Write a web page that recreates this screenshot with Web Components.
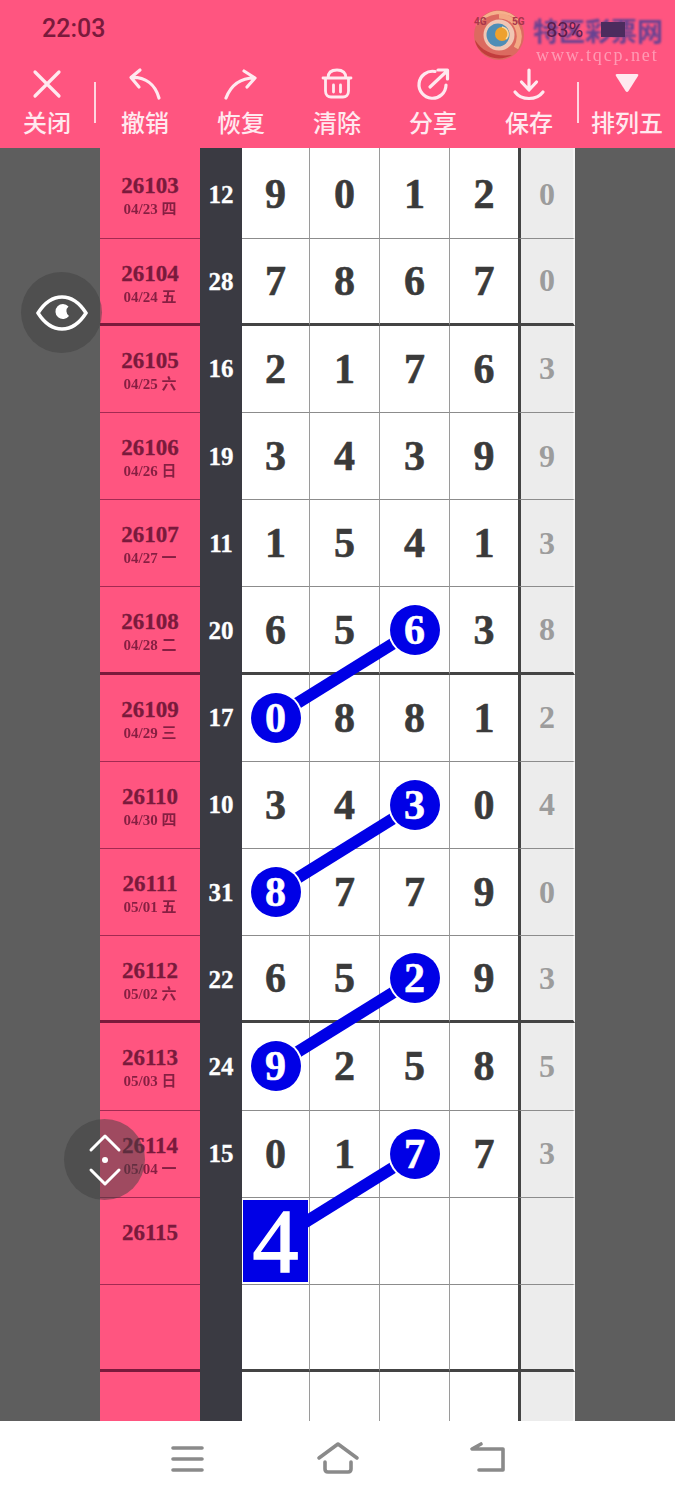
<!DOCTYPE html>
<html lang="zh">
<head>
<meta charset="utf-8">
<title>排列五</title>
<style>
  html, body { margin: 0; padding: 0; }
  body {
    width: 675px;
    height: 1500px;
    overflow: hidden;
    display: flex;
    flex-direction: column;
    background: #5e5e5e;
    font-family: "Liberation Serif", "Noto Sans CJK SC", serif;
  }
</style>
</head>
<body>
<status-bar time="22:03"></status-bar>
<tool-bar>
  <tool-button label="关闭" style="width:94px">
    <svg viewBox="0 0 34 34" width="34" height="34" fill="none" stroke="currentColor" stroke-width="3.2" stroke-linecap="round"><path d="M5 5 29 29M29 5 5 29"/></svg>
  </tool-button>
  <tool-sep></tool-sep>
  <tool-button label="撤销">
    <svg viewBox="0 0 34 34" width="34" height="34" fill="none" stroke="currentColor" stroke-width="3.2" stroke-linecap="round" stroke-linejoin="round"><path d="M12 3 3 10.500 11 20M3.500 10.500C17 10 27 17 31 31"/></svg>
  </tool-button>
  <tool-button label="恢复">
    <svg viewBox="0 0 34 34" width="34" height="34" fill="none" stroke="currentColor" stroke-width="3.2" stroke-linecap="round" stroke-linejoin="round"><path d="M20 4 31 11 23 20M30.500 11C16 11 7 18 2 31"/></svg>
  </tool-button>
  <tool-button label="清除">
    <svg viewBox="0 0 34 34" width="34" height="34" fill="none" stroke="currentColor" stroke-width="2.8" stroke-linecap="round" stroke-linejoin="round"><path d="M3 11H31M8 11C8 6 11 3 17 3S26 6 26 11M5.500 11V24C5.500 28 8 30 11 30H23C26 30 28.500 28 28.500 24V11M13.500 18V25M20.500 18V25"/></svg>
  </tool-button>
  <tool-button label="分享">
    <svg viewBox="0 0 34 34" width="34" height="34" fill="none" stroke="currentColor" stroke-width="3.2" stroke-linecap="round" stroke-linejoin="round"><path d="M19 4.500A13.500 13.500 0 1 0 30 18M14 20 31 4M22 3H31.500V12"/></svg>
  </tool-button>
  <tool-button label="保存">
    <svg viewBox="0 0 34 34" width="34" height="34" fill="none" stroke="currentColor" stroke-width="3.2" stroke-linecap="round" stroke-linejoin="round"><path d="M17 3V22M9.500 15 17 23 24.500 15M3 25C6 29 11 31.500 17 31.500S28 29 31 25"/></svg>
  </tool-button>
  <tool-sep></tool-sep>
  <tool-button label="排列五" style="width:94px">
    <svg viewBox="0 0 34 34" width="34" height="34"><path d="M7 7H27Q29 7 28 9L18.500 24Q17 26 15.500 24L6 9Q5 7 7 7Z" fill="currentColor"/></svg>
  </tool-button>
</tool-bar>
<draw-board>
  <draw-row issue="26103" date="04/23 四" sum="12" digits="9012" tail="0" style="--h:90.7px;--top:3px"></draw-row>
  <draw-row issue="26104" date="04/24 五" sum="28" digits="7867" tail="0" thick></draw-row>
  <draw-row issue="26105" date="04/25 六" sum="16" digits="2176" tail="3"></draw-row>
  <draw-row issue="26106" date="04/26 日" sum="19" digits="3439" tail="9"></draw-row>
  <draw-row issue="26107" date="04/27 一" sum="11" digits="1541" tail="3"></draw-row>
  <draw-row issue="26108" date="04/28 二" sum="20" digits="6563" tail="8" marked="2" thick></draw-row>
  <draw-row issue="26109" date="04/29 三" sum="17" digits="0881" tail="2" marked="0"></draw-row>
  <draw-row issue="26110" date="04/30 四" sum="10" digits="3430" tail="4" marked="2"></draw-row>
  <draw-row issue="26111" date="05/01 五" sum="31" digits="8779" tail="0" marked="0"></draw-row>
  <draw-row issue="26112" date="05/02 六" sum="22" digits="6529" tail="3" marked="2" thick></draw-row>
  <draw-row issue="26113" date="05/03 日" sum="24" digits="9258" tail="5" marked="0"></draw-row>
  <draw-row issue="26114" date="05/04 一" sum="15" digits="0177" tail="3" marked="2"></draw-row>
  <draw-row issue="26115" square="4"></draw-row>
  <draw-row thick></draw-row>
  <draw-row></draw-row>
</draw-board>
<nav-bar></nav-bar>

<script>
  class StatusBar extends HTMLElement {
    constructor() {
      super();
      this.attachShadow({ mode: "open" });
    }

    connectedCallback() {
      this.shadowRoot.innerHTML = `
        <style>
          :host {
            display: flex;
            align-items: center;
            box-sizing: border-box;
            height: 62px;
            padding: 0 0 6px 42px;
            position: relative;
            background: #ff5580;
            color: #7a1a3c;
            font: 500 25px/1 Roboto, sans-serif;
          }
          .logo { position: absolute; left: 472px; top: 8px; filter: blur(.7px); }
          .brand {
            position: absolute; left: 533px; top: 15px;
            font: 700 26px/30px "Noto Sans CJK SC", sans-serif;
            color: rgba(62, 62, 150, .78);
            filter: blur(.8px);
          }
          .net {
            position: absolute; left: 536px; top: 45px;
            font: 400 18px/20px "Liberation Serif", serif;
            letter-spacing: 1.9px;
            color: rgba(255, 255, 255, .4);
            filter: blur(.4px);
          }
          .batt {
            position: absolute; left: 546px; top: 19px;
            font: 400 20px/22px Roboto, sans-serif;
            color: #5a1c4c;
          }
          .block { position: absolute; left: 601px; top: 22px; width: 24px; height: 15px; background: #4c2c5e; filter: blur(.5px); }
          .net-type {
            position: absolute; top: 16px;
            font: 700 10px/12px Roboto, sans-serif;
            color: #a8364c;
          }
        </style>
        <span>${this.getAttribute("time")}</span>
        <svg class="logo" width="54" height="54" viewBox="0 0 54 54" fill="none">
          <circle cx="27" cy="27" r="25" fill="#dc6a60"/>
          <path d="M4 18A25 25 0 0 1 48 14 30 30 0 0 0 4 18Z" fill="#f6b18c"/>
          <path d="M3 32C5 46 24 56 40 47 24 49 10 44 3 32Z" fill="#c23c3c"/>
          <path d="M44 40C52 26 44 8 27 8" stroke="#f3a884" stroke-width="5"/>
          <circle cx="27" cy="27" r="15.500" fill="#f0c6b4"/>
          <circle cx="26" cy="27" r="11.500" fill="#4e8db6"/>
          <circle cx="30" cy="26" r="7" fill="#eea12e"/>
          <path d="M30 19C36 20 38 27 34 31" stroke="#f6d9a8" stroke-width="1.500"/>
        </svg>
        <span class="net-type" style="left:474px">4G</span>
        <span class="net-type" style="left:512px">5G</span>
        <span class="brand">特区彩票网</span>
        <span class="net">www.tqcp.net</span>
        <span class="batt">83%</span>
        <span class="block"></span>
      `;
    }
  }

  class ToolBar extends HTMLElement {
    constructor() {
      super();
      this.attachShadow({ mode: "open" });
      this.shadowRoot.innerHTML = `
        <style>
          :host {
            display: flex;
            height: 86px;
            background: #ff5580;
            color: #ffe9ef;
          }
        </style>
        <slot></slot>
      `;
    }
  }

  class ToolButton extends HTMLElement {
    constructor() {
      super();
      this.attachShadow({ mode: "open" });
    }

    connectedCallback() {
      this.shadowRoot.innerHTML = `
        <style>
          :host {
            display: flex;
            flex-direction: column;
            align-items: center;
            flex: none;
            width: 96px;
            padding-top: 5px;
            box-sizing: border-box;
          }
          .icon { height: 34px; }
          .label {
            margin-top: 3px;
            font: 500 24px/36px "Noto Sans CJK SC", sans-serif;
            white-space: nowrap;
          }
        </style>
        <div class="icon"><slot></slot></div>
        <div class="label">${this.getAttribute("label")}</div>
      `;
    }
  }

  class ToolSep extends HTMLElement {
    constructor() {
      super();
      this.attachShadow({ mode: "open" });
      this.shadowRoot.innerHTML = `
        <style>
          :host {
            display: block;
            flex: none;
            width: 2px;
            height: 41px;
            margin: 20px 1px 0 0;
            background: #ffd5e0;
          }
        </style>
      `;
    }
  }

  class DrawBoard extends HTMLElement {
    constructor() {
      super();
      this.attachShadow({ mode: "open" });
      // each line joins two marked draws, coordinates are the board's own
      const links = [[315, 482, 175, 569], [315, 657, 175, 744], [315, 831, 175, 918], [315, 1006, 175, 1093]];
      this.shadowRoot.innerHTML = `
        <style>
          :host {
            display: block;
            position: relative;
            flex: 1;
            min-height: 0;
            overflow: hidden;
            padding: 0 0 0 100px;
            background: #5e5e5e;
          }
          svg { position: absolute; left: 100px; top: 0; z-index: 1; }
        </style>
        <slot></slot>
        <svg width="475" height="1273">
          ${links.map(([a, b, c, d]) => `<line x1="${a}" y1="${b}" x2="${c}" y2="${d}" stroke="#0000e6" stroke-width="12"/>`).join("")}
        </svg>
      `;
    }
  }

  class DrawRow extends HTMLElement {
    constructor() {
      super();
      this.attachShadow({ mode: "open" });
    }

    connectedCallback() {
      const digits = this.getAttribute("digits") || "";
      const marked = this.getAttribute("marked");
      const square = this.getAttribute("square");
      let cells = "";
      for (let i = 0; i < 4; i++) {
        let inner = digits[i] || "";
        if (marked == i) inner = `<span class="ball">${inner}</span>`;
        if (square && i == 0) inner = `<span class="square">${square}</span>`;
        cells += `<div class="cell c${i}">${inner}</div>`;
      }
      const issue = this.getAttribute("issue") || "";
      const date = this.getAttribute("date");
      this.shadowRoot.innerHTML = `
        <style>
          :host {
            display: grid;
            grid-template-columns: 100px 42px 68px 70px 70px 68px 57px;
            width: 475px;
            height: var(--h, 87.2px);
            box-sizing: border-box;
            font-family: "Liberation Serif", "Noto Sans CJK SC", serif;
            font-weight: 700;
          }
          .issue, .sum, .cell, .tail {
            display: flex;
            align-items: center;
            justify-content: center;
            box-sizing: border-box;
            padding-top: var(--top, 0);
          }
          .issue {
            flex-direction: column;
            justify-content: flex-start;
            padding-top: calc(var(--top, 0px) + 22px);
            background: #ff5580;
            color: #7a1a3c;
            border-bottom: 1px solid #a32a52;
          }
          .issue b { font-size: 23px; line-height: 26px; -webkit-text-stroke: .3px currentColor; }
          .issue small {
            margin-top: 2px;
            font-size: 15px;
            line-height: 17px;
            font-weight: 700;
            opacity: .9;
          }
          .sum {
            background: #3a3a42;
            color: #fff;
            font-size: 25px;
            -webkit-text-stroke: .3px #fff;
          }
          .cell {
            background: #fff;
            color: #3a3a3a;
            font-size: 42px;
            -webkit-text-stroke: .6px currentColor;
            border-right: 1px solid #9a9a9a;
            border-bottom: 1px solid #8c8c8c;
          }
          .c3 { border-right: 0; }
          .tail {
            background: #ececec;
            color: #9c9c9c;
            font-size: 32px;
            border-left: 3px solid #444;
            border-right: 2px solid #f6f6f6;
            border-bottom: 1px solid #8c8c8c;
          }
          :host([thick]) .issue { border-bottom: 3px solid #7a1a3c; }
          :host([thick]) .cell, :host([thick]) .tail { border-bottom: 3px solid #444; }
          .ball {
            position: relative;
            z-index: 2;
            display: flex;
            align-items: center;
            justify-content: center;
            width: 50px;
            height: 50px;
            border-radius: 50%;
            background: #0000e6;
            color: #fff;
            box-shadow: 0 0 0 2px #fff;
          }
          .square {
            position: relative;
            z-index: 2;
            display: flex;
            align-items: center;
            justify-content: center;
            width: 65px;
            height: 82px;
            background: #0000e6;
            color: #fff;
            font-size: 92px;
            font-weight: 400;
            -webkit-text-stroke: 1.5px #fff;
          }
        </style>
        <div class="issue"><b>${issue}</b>${date ? `<small>${date}</small>` : ""}</div>
        <div class="sum">${this.getAttribute("sum") || ""}</div>
        ${cells}
        <div class="tail">${this.getAttribute("tail") || ""}</div>
      `;
    }
  }

  class FloatButton extends HTMLElement {
    constructor() {
      super();
      this.attachShadow({ mode: "open" });
      this.shadowRoot.innerHTML = `
        <style>
          :host {
            position: absolute;
            z-index: 5;
            display: flex;
            align-items: center;
            justify-content: center;
            width: 81px;
            height: 81px;
            border-radius: 50%;
            background: rgba(64, 64, 64, .5);
            color: #fff;
          }
        </style>
        <slot></slot>
      `;
    }
  }

  class NavBar extends HTMLElement {
    constructor() {
      super();
      this.attachShadow({ mode: "open" });
      this.shadowRoot.innerHTML = `
        <style>
          :host {
            display: flex;
            justify-content: center;
            gap: 100px;
            align-items: center;
            height: 79px;
            padding-bottom: 4px;
            box-sizing: border-box;
            background: #fff;
            color: #8a8a8a;
          }
          svg { display: block; }
        </style>
        <svg width="50" height="36" viewBox="0 0 50 36" fill="none" stroke="currentColor" stroke-width="3.600" stroke-linecap="round"><path d="M10 7H39M10 18H39M10 29H39"/></svg>
        <svg width="50" height="36" viewBox="0 0 50 36" fill="none" stroke="currentColor" stroke-width="3.600" stroke-linecap="round" stroke-linejoin="round"><path d="M6 17 25 3 44 17M12 21V28Q12 31 15 31H35Q38 31 38 28V21"/></svg>
        <svg width="50" height="36" viewBox="0 0 50 36" fill="none" stroke="currentColor" stroke-width="3.600" stroke-linecap="round" stroke-linejoin="round"><path d="M18 3 9 8H40V29H16"/></svg>
      `;
    }
  }

  customElements.define("status-bar", StatusBar);
  customElements.define("tool-bar", ToolBar);
  customElements.define("tool-button", ToolButton);
  customElements.define("tool-sep", ToolSep);
  customElements.define("draw-board", DrawBoard);
  customElements.define("draw-row", DrawRow);
  customElements.define("float-button", FloatButton);
  customElements.define("nav-bar", NavBar);

  document.querySelector("draw-board").insertAdjacentHTML("beforeend", `
    <float-button style="left:21px;top:124px">
      <svg width="52" height="38" viewBox="0 0 52 38" fill="none" stroke="currentColor" stroke-width="3.500"><path d="M2 19C9 8 17 3 26 3S43 8 50 19C43 30 35 35 26 35S9 30 2 19Z"/><path d="M32.500 12.500A7.500 7.500 0 1 0 33 22 6 6 0 0 1 32.500 12.500Z" fill="currentColor" stroke="none"/></svg>
    </float-button>
    <float-button style="left:64px;top:971px">
      <svg width="34" height="56" viewBox="0 0 34 56" fill="none" stroke="currentColor" stroke-width="3" stroke-linecap="round" stroke-linejoin="round"><path d="M3 18 17 4 31 18M3 38 17 52 31 38"/><circle cx="17" cy="28" r="3" fill="currentColor" stroke="none"/></svg>
    </float-button>
  `);
</script>
</body>
</html>
